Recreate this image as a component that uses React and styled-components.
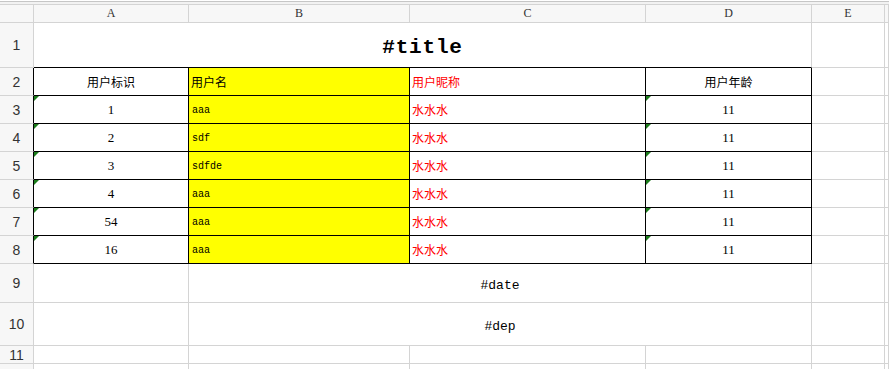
import React from "react";
import styled, { createGlobalStyle, css } from "styled-components";

const GlobalStyle = createGlobalStyle`
  html, body {
    margin: 0;
    padding: 0;
    background: #ffffff;
  }
  body {
    font-family: "Liberation Sans", Arial, sans-serif;
    overflow: hidden;
  }
`;

const GRAY = "#d4d4d4";
const BLACK = "#000000";
const CJK = `"Noto Sans CJK SC", "Liberation Sans", sans-serif`;

const rows = [
  { id: 1, name: "aaa" },
  { id: 2, name: "sdf" },
  { id: 3, name: "sdfde" },
  { id: 4, name: "aaa" },
  { id: 54, name: "aaa" },
  { id: 16, name: "aaa" },
];

const Sheet = styled.div`
  width: 889px;
  height: 369px;
  overflow: hidden;
  background: #fff;
`;

const TopStrip = styled.div`
  margin-top: 1px;
  height: 4px;
  box-sizing: border-box;
  border-top: 1px solid #c6c6c6;
  border-bottom: 1px solid ${GRAY};
  background: #f2f2f2;
`;

const Grid = styled.div`
  display: grid;
  grid-template-columns: 34px 155px 221px 236px 166px 73px 1fr;
  grid-template-rows: 18px 45px repeat(7, 28px) 39px 43px 18px 20px;
`;

const Cell = styled.div`
  position: relative;
  box-sizing: border-box;
  display: flex;
  align-items: center;
  justify-content: ${(p) =>
    p.$align === "left" ? "flex-start" : "center"};
  padding-left: ${(p) => (p.$align === "left" ? "2px" : "0")};
  grid-column: ${(p) => (p.$span ? `span ${p.$span}` : "auto")};
  border-right: 1px solid ${(p) => (p.$edge ? BLACK : GRAY)};
  border-bottom: 1px solid ${(p) => (p.$under ? BLACK : GRAY)};
  background: ${(p) => p.$bg || "#fff"};
  color: ${(p) => p.$color || "#000"};
  font-family: ${CJK};
  font-size: 12px;
  white-space: nowrap;

  ${(p) =>
    p.$mark &&
    css`
      &::before {
        content: "";
        position: absolute;
        top: 0;
        left: 0;
        border-top: 5px solid #1c7d1c;
        border-right: 5px solid transparent;
      }
    `}
`;

const ColHead = styled(Cell)`
  background: #f7f7f7;
  color: #333;
  font-family: "Liberation Serif", "Times New Roman", serif;
  font-size: 12px;
`;

const RowHead = styled(Cell)`
  background: #f7f7f7;
  color: #333;
  font-family: "Liberation Sans", Arial, sans-serif;
  font-size: 14px;
`;

const Title = styled.span`
  font-family: "Liberation Mono", "DejaVu Sans Mono", monospace;
  font-weight: bold;
  font-size: 21px;
  letter-spacing: 0.8px;
  margin-top: 5px;
`;

const Num = styled.span`
  font-family: "Liberation Serif", "Times New Roman", serif;
  font-size: 13px;
`;

const Code = styled.span`
  font-family: "Liberation Mono", "DejaVu Sans Mono", monospace;
  font-size: ${(p) => p.$size || 13}px;
  padding-left: ${(p) => (p.$pad ? "1px" : "0")};
  margin-top: ${(p) => p.$drop || 0}px;
`;

const Label = styled.span`
  font-family: ${CJK};
  font-size: 12px;
`;

const YELLOW = "#ffff00";
const RED = "#ff0000";

export default function App() {
  return (
    <>
      <GlobalStyle />
      <Sheet>
        <TopStrip />
        <Grid>
          {/* column letters */}
          <ColHead />
          {["A", "B", "C", "D", "E"].map((c) => (
            <ColHead key={c}>{c}</ColHead>
          ))}
          <ColHead />

          {/* row 1: merged title */}
          <RowHead>1</RowHead>
          <Cell $span={4} $under>
            <Title>#title</Title>
          </Cell>
          <Cell />
          <Cell />

          {/* row 2: headers */}
          <RowHead $edge>2</RowHead>
          <Cell $edge $under>
            <Label>用户标识</Label>
          </Cell>
          <Cell $edge $under $align="left" $bg={YELLOW}>
            <Label>用户名</Label>
          </Cell>
          <Cell $edge $under $align="left" $color={RED}>
            <Label>用户昵称</Label>
          </Cell>
          <Cell $edge $under>
            <Label>用户年龄</Label>
          </Cell>
          <Cell />
          <Cell />

          {rows.map((r, i) => (
            <React.Fragment key={i}>
              <RowHead $edge>{i + 3}</RowHead>
              <Cell $edge $under $mark>
                <Num>{r.id}</Num>
              </Cell>
              <Cell $edge $under $align="left" $bg={YELLOW}>
                <Code $size={10} $pad $drop={2}>
                  {r.name}
                </Code>
              </Cell>
              <Cell $edge $under $align="left" $color={RED}>
                <Label>水水水</Label>
              </Cell>
              <Cell $edge $under $mark>
                <Num>11</Num>
              </Cell>
              <Cell />
              <Cell />
            </React.Fragment>
          ))}

          {/* row 9 */}
          <RowHead>9</RowHead>
          <Cell />
          <Cell $span={3}>
            <Code $drop={4}>#date</Code>
          </Cell>
          <Cell />
          <Cell />

          {/* row 10 */}
          <RowHead>10</RowHead>
          <Cell />
          <Cell $span={3}>
            <Code $drop={4}>#dep</Code>
          </Cell>
          <Cell />
          <Cell />

          {/* row 11 */}
          <RowHead>11</RowHead>
          <Cell />
          <Cell />
          <Cell />
          <Cell />
          <Cell />
          <Cell />

          {/* row 12 (cut off) */}
          <RowHead />
          <Cell />
          <Cell />
          <Cell />
          <Cell />
          <Cell />
          <Cell />
        </Grid>
      </Sheet>
    </>
  );
}
